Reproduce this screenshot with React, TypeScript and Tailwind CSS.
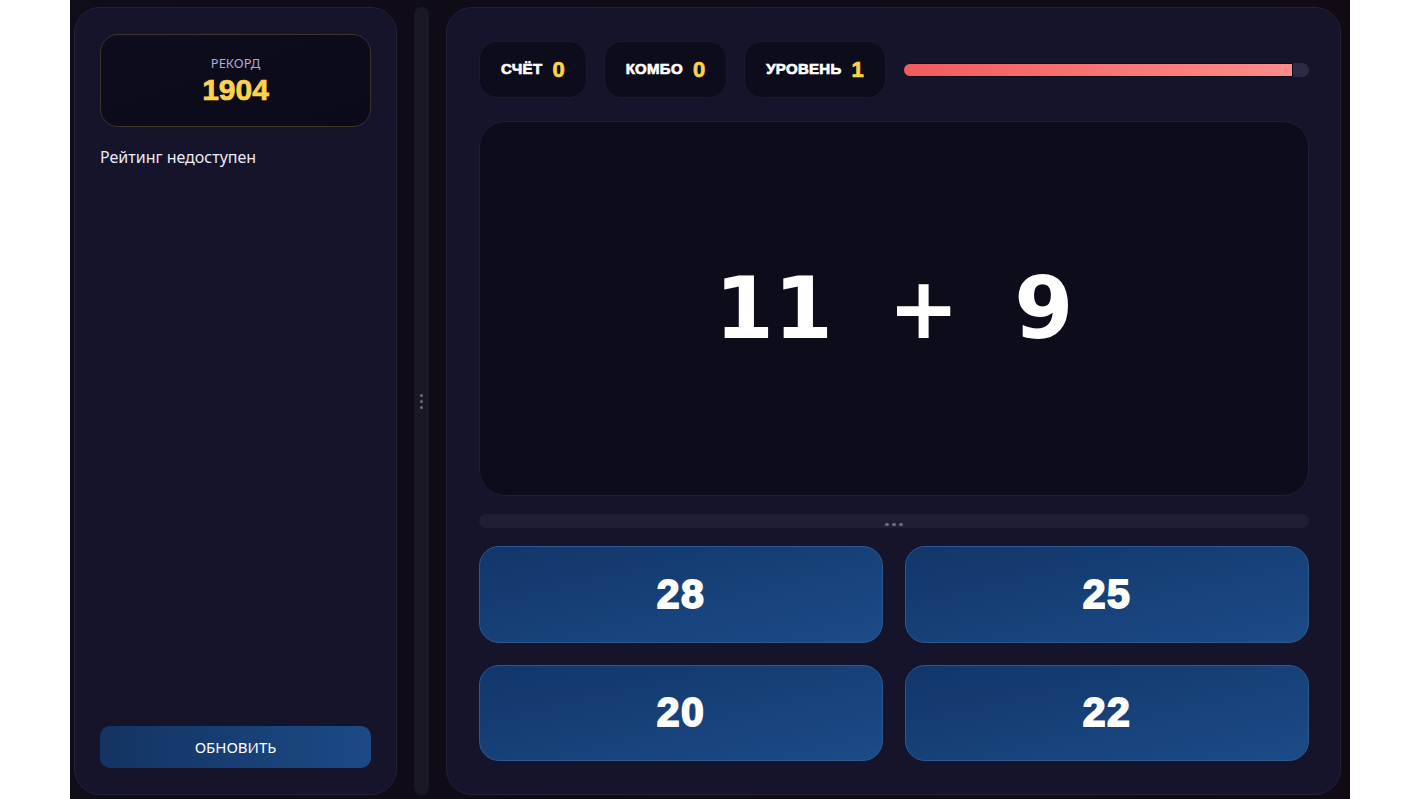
const heavy = "font-['Liberation_Sans',Arial,sans-serif] font-bold [-webkit-text-stroke:0.7px_currentColor]";

function Stat({ label, value }: { label: string; value: string }) {
  return (
    <div className="flex h-[57px] items-center gap-[10px] rounded-[18px] border border-[#1a1930] bg-[#0d0c1a] px-[21px]">
      <span className={`${heavy} text-[15px] uppercase tracking-[0.3px] text-white`}>{label}</span>
      <span className={`${heavy} text-[22px] text-[#fcd34d]`}>{value}</span>
    </div>
  );
}

function Answer({ n }: { n: number }) {
  return (
    <button className="flex items-center justify-center rounded-[20px] border border-[#2b5992] bg-gradient-to-br from-[#12366a] to-[#1c4b87] text-white">
      <span className="font-['Liberation_Sans',Arial,sans-serif] text-[41px] font-bold tracking-[1.5px] [-webkit-text-stroke:1.8px_white]">
        {n}
      </span>
    </button>
  );
}

export default function App() {
  return (
    <div className="flex h-[799px] w-full justify-center bg-white">
      <div className="flex h-full w-[1280px] bg-gradient-to-r from-[#0f0d18] to-[#120b15] pb-[4px] pl-[4px] pr-[9px] pt-[7px] font-['Noto_Sans',sans-serif]">
        {/* left: record + leaderboard */}
        <aside className="flex w-[323px] flex-col rounded-[26px] border border-[#222138] bg-[#15142a] px-[25px] pb-[26px] pt-[26px]">
          <div className="flex h-[93px] flex-col items-center justify-center rounded-[18px] border border-[#3b3428] bg-gradient-to-br from-[#0e0d1d] to-[#0b0a18]">
            <div className="text-[13px] leading-[18px] text-[#aeaad8]">РЕКОРД</div>
            <div className={`${heavy} mt-[1px] text-[30px] leading-[34px] text-[#fcd34d]`}>1904</div>
          </div>
          <p className="mt-[18px] text-[16px] text-[#ecebf5]">Рейтинг недоступен</p>
          <button className="mt-auto h-[42px] rounded-[10px] bg-gradient-to-r from-[#133462] to-[#1b4a86] text-[15px] text-white">
            ОБНОВИТЬ
          </button>
        </aside>

        {/* resize handle */}
        <div className="mx-[17px] flex w-[15px] flex-col items-center justify-center gap-[3px] rounded-full bg-[#1a1822]">
          <span className="h-[3px] w-[3px] rounded-full bg-[#6e6d86]" />
          <span className="h-[3px] w-[3px] rounded-full bg-[#6e6d86]" />
          <span className="h-[3px] w-[3px] rounded-full bg-[#6e6d86]" />
        </div>

        {/* right: game */}
        <main className="flex flex-1 flex-col rounded-[26px] border border-[#222138] bg-[#15142a] py-[33px] pl-[32px] pr-[31px]">
          <div className="flex h-[57px] items-center gap-[17px]">
            <Stat label="Счёт" value="0" />
            <Stat label="Комбо" value="0" />
            <Stat label="Уровень" value="1" />
            <div className="h-[14px] flex-1 overflow-hidden rounded-full bg-[#2b2a47]">
              <div
                className="h-full rounded-l-full border border-[#0a0a1a] bg-gradient-to-r from-[#f05b5c] to-[#ff8b8b]"
                style={{ width: "96%" }}
              />
            </div>
          </div>

          <div className="mt-[23px] flex flex-1 items-center justify-center gap-[55px] rounded-[26px] border border-[#1e1d33] bg-[#0d0c1b] font-['DejaVu_Sans',sans-serif] text-[85px] font-bold leading-none text-white">
            <span>11</span>
            <span>+</span>
            <span>9</span>
          </div>

          <div className="mt-[18px] flex h-[14px] items-end justify-center gap-[3px] rounded-full bg-[#201e34] pb-[2px]">
            <span className="h-[3px] w-[4px] rounded-full bg-[#6e6d86]" />
            <span className="h-[3px] w-[4px] rounded-full bg-[#6e6d86]" />
            <span className="h-[3px] w-[4px] rounded-full bg-[#6e6d86]" />
          </div>

          <div className="mt-[18px] grid h-[215px] grid-cols-2 grid-rows-2 gap-[22px]">
            <Answer n={28} />
            <Answer n={25} />
            <Answer n={20} />
            <Answer n={22} />
          </div>
        </main>
      </div>
    </div>
  );
}
